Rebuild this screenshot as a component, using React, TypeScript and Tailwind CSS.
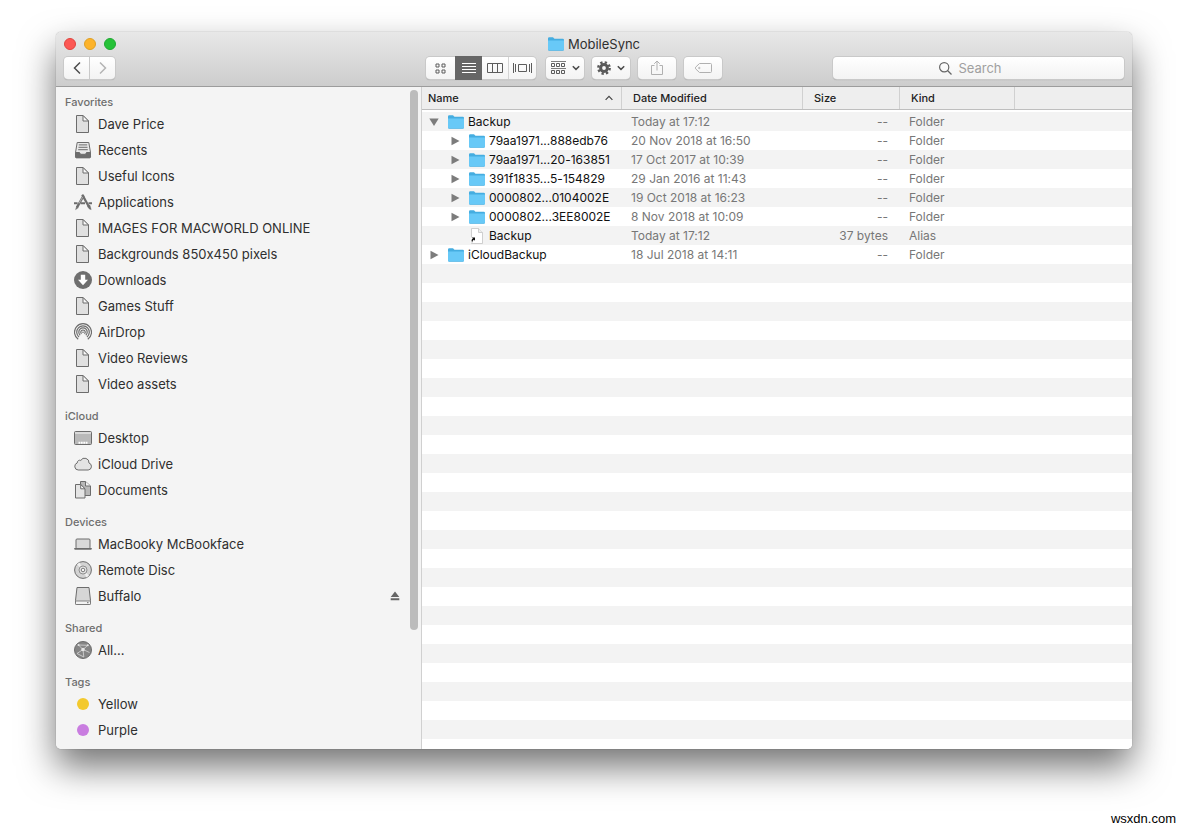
import type { ReactNode } from "react";

type SidebarItem = { label: string; icon: ReactNode; eject?: boolean };
type SidebarSection = { title: string; items: SidebarItem[] };
type FileRow = {
    name: string;
    date: string;
    size: string;
    kind: string;
    type: "folder" | "alias";
    child?: boolean;
    open?: boolean;
};

/* Sidebar icons, all on an 18px grid */
function Glyph({ children }: { children: ReactNode }) {
    return (
        <svg viewBox="0 0 18 18" className="size-[18px] shrink-0" fill="none" stroke="#6c6c6c" aria-hidden="true">
            {children}
        </svg>
    );
}

const DocIcon = () => (
    <Glyph>
        <path d="M2.500.5H9l5.500 5.500v11.500h-12z" fill="#e0e0e0" />
        <path d="M9 .5l5.500 5.500H9z" fill="#f8f8f8" />
    </Glyph>
);

const RecentsIcon = () => (
    <Glyph>
        <path d="M3.200 1.500h11.600l1.700 10v4.200a1 1 0 0 1-1 1h-13a1 1 0 0 1-1-1v-4.200z" fill="#e8e8e8" />
        <path d="M1.500 11.500h4l1 1.800h5l1-1.800h4v4.200a1 1 0 0 1-1 1h-13a1 1 0 0 1-1-1z" fill="#6c6c6c" />
        <path d="M4.800 3.900h8.400M4.500 6.300h9M4.200 8.700h9.600" />
    </Glyph>
);

const ApplicationsIcon = () => (
    <Glyph>
        <path d="M9.700 2.500 3 14.300" strokeWidth="2.400" />
        <path d="M2.600 13.600l-1 3 2.600-1.800z" fill="#6c6c6c" strokeWidth=".5" />
        <path d="M8.200 1.600l6.600 11.900" strokeWidth="2.200" />
        <path d="M13.600 13.200l2.300-1.100 1.300 4.500c-1.900-.3-3.100-1.500-3.600-3.400z" fill="#6c6c6c" strokeWidth=".4" />
        <path d="M0 10.300h3.600M6.500 10.300h4.500M14.500 10.300H18" strokeWidth="2" />
        <path d="M8.800 3.800 5 10.500" stroke="#dedede" strokeWidth=".6" />
    </Glyph>
);

const DownloadsIcon = () => (
    <Glyph>
        <circle cx="9" cy="9" r="9" fill="#6f6f6f" stroke="none" />
        <path d="M6.800 3.800h4.400v5h2.800L9 14.200 4 8.800h2.800z" fill="#fff" stroke="none" />
    </Glyph>
);

const AirDropIcon = () => (
    <Glyph>
        <path d="M4.200 16.200a8.500 8.500 0 1 1 9.600 0" strokeWidth="1.200" />
        <path d="M5 14a6.300 6.300 0 1 1 8 0" strokeWidth="1.200" />
        <path d="M6.200 12.200a4.200 4.200 0 1 1 5.600 0" strokeWidth="1.200" />
        <path d="M7.500 10.800a2.200 2.200 0 1 1 3 0" strokeWidth="1.200" />
        <circle cx="9" cy="9.200" r=".8" fill="#6c6c6c" stroke="none" />
    </Glyph>
);

const DesktopIcon = () => (
    <Glyph>
        <rect x=".5" y="2.500" width="17" height="13" rx="1" fill="#b9b9b9" />
        <path d="M1 4h16" stroke="#efefef" strokeWidth="1.200" />
        <path d="M4.500 13.800h9" stroke="#fff" strokeWidth="2" strokeDasharray="1.800 .6" />
    </Glyph>
);

const CloudIcon = () => (
    <Glyph>
        <path
            d="M4.200 15a3.600 3.600 0 0 1-1-7 2.600 2.600 0 0 1 3.600-2.600 4.400 4.400 0 0 1 8.200 2.600 3.600 3.600 0 0 1-.8 7z"
            fill="#e4e4e4"
        />
    </Glyph>
);

const DocumentsIcon = () => (
    <Glyph>
        <path d="M6.500.5h5l5 4.500v9.500h-10z" fill="#b8b8b8" />
        <path d="M11.500.5v4.500h5" fill="#f2f2f2" />
        <path d="M1.500 3.500h5.200l4.300 4.300v9.200H1.500z" fill="#e4e4e4" />
        <path d="M6.700 3.500v4.300H11z" fill="#fafafa" />
    </Glyph>
);

const LaptopIcon = () => (
    <Glyph>
        <rect x="2" y="4" width="14" height="9.500" rx="1" fill="#d9d9d9" />
        <path d="M.2 13h17.600v.8a1 1 0 0 1-1 1H1.200a1 1 0 0 1-1-1z" fill="#6c6c6c" stroke="none" />
    </Glyph>
);

const DiscIcon = () => (
    <Glyph>
        <circle cx="9" cy="9" r="8.400" fill="#d3d3d3" />
        <path d="M9 9 3 3.500 5.500 1.500zM9 9l6 5.500-2.500 2z" fill="#f0f0f0" stroke="none" />
        <circle cx="9" cy="9" r="4" fill="#e6e6e6" strokeWidth=".7" />
        <circle cx="9" cy="9" r="1.800" fill="#f4f4f4" strokeWidth=".9" />
    </Glyph>
);

const DriveIcon = () => (
    <Glyph>
        <path d="M3 .5h12l1.500 13v3a1 1 0 0 1-1 1h-13a1 1 0 0 1-1-1v-3z" fill="#d6d6d6" />
        <path d="M1.500 14h15v2.500a1 1 0 0 1-1 1h-13a1 1 0 0 1-1-1z" fill="#f3f3f3" strokeWidth=".8" />
        <path d="M13 15.700h1.500" />
    </Glyph>
);

const GlobeIcon = () => (
    <Glyph>
        <circle cx="9" cy="9" r="8.500" fill="#858585" />
        <path
            d="M9 8.500 4.500 4M9 8.500l4.800-4.200M9 8.500 9.800 16M9 8.500 3 12.500M9 8.500l6.500 3M4.500 4l9.300.3M3 12.500l6.800 3.500"
            stroke="#d8d8d8"
            strokeWidth=".8"
        />
        <path d="M9 6.700a1.800 1.800 0 1 1 0 3.600 1.800 1.800 0 0 1 0-3.600zM4.500 3a1 1 0 1 1 0 2 1 1 0 0 1 0-2zM13.800 3.300a1 1 0 1 1 0 2 1 1 0 0 1 0-2z" fill="#e4e4e4" stroke="none" />
    </Glyph>
);

const TagDot = ({ color }: { color: string }) => (
    <Glyph>
        <circle cx="9" cy="9" r="6" fill={color} stroke="none" />
    </Glyph>
);

const FolderIcon = () => (
    <svg viewBox="0 0 16 14" className="h-[14px] w-4 shrink-0" aria-hidden="true">
        <path d="M0 1.500A1.200 1.200 0 0 1 1.200.3h3.600c.8 0 1 1.400 1.900 1.400h8.100A1.200 1.200 0 0 1 16 2.900v9.600a1.200 1.200 0 0 1-1.200 1.200H1.200A1.200 1.200 0 0 1 0 12.500z" fill="#45ade0" />
        <path d="M0 3.400h16v8.900a1 1 0 0 1-1 1H1a1 1 0 0 1-1-1z" fill="#68c9f7" />
    </svg>
);

const AliasIcon = () => (
    <svg viewBox="0 0 16 16" className="size-4 shrink-0" aria-hidden="true">
        <path d="M2.500.5h7l4 4v11h-11z" fill="#fff" stroke="#c4c4c4" strokeWidth=".8" />
        <path d="M9.500.5v4h4" fill="#eee" stroke="#c4c4c4" strokeWidth=".8" />
        <path d="M1.500 9.500h5v5h-5z" fill="#fff" />
        <path d="M2.800 9.500H6v3.200l-1-1c-1.300.6-1.800 1.500-1.600 3-1.400-1.800-1-3.300.5-4.100z" fill="#111" />
    </svg>
);

const Disclosure = ({ open }: { open?: boolean }) => (
    <svg viewBox="0 0 10 10" className="size-[10px] shrink-0" fill="#7c7c7c" aria-hidden="true">
        {open ? <path d="M.3 1.500h9.400L5 9z" /> : <path d="M1.500.8v8.400L9.500 5z" />}
    </svg>
);

const Chevron = () => (
    <svg viewBox="0 0 8 6" className="h-[6px] w-2" fill="none" stroke="#4c4c4c" strokeWidth="1.500" aria-hidden="true">
        <path d="M.8 1.200 4 4.400l3.200-3.200" />
    </svg>
);

const sections: SidebarSection[] = [
    {
        title: "Favorites",
        items: [
            { label: "Dave Price", icon: <DocIcon /> },
            { label: "Recents", icon: <RecentsIcon /> },
            { label: "Useful Icons", icon: <DocIcon /> },
            { label: "Applications", icon: <ApplicationsIcon /> },
            { label: "IMAGES FOR MACWORLD ONLINE", icon: <DocIcon /> },
            { label: "Backgrounds 850x450 pixels", icon: <DocIcon /> },
            { label: "Downloads", icon: <DownloadsIcon /> },
            { label: "Games Stuff", icon: <DocIcon /> },
            { label: "AirDrop", icon: <AirDropIcon /> },
            { label: "Video Reviews", icon: <DocIcon /> },
            { label: "Video assets", icon: <DocIcon /> },
        ],
    },
    {
        title: "iCloud",
        items: [
            { label: "Desktop", icon: <DesktopIcon /> },
            { label: "iCloud Drive", icon: <CloudIcon /> },
            { label: "Documents", icon: <DocumentsIcon /> },
        ],
    },
    {
        title: "Devices",
        items: [
            { label: "MacBooky McBookface", icon: <LaptopIcon /> },
            { label: "Remote Disc", icon: <DiscIcon /> },
            { label: "Buffalo", icon: <DriveIcon />, eject: true },
        ],
    },
    { title: "Shared", items: [{ label: "All...", icon: <GlobeIcon /> }] },
    {
        title: "Tags",
        items: [
            { label: "Yellow", icon: <TagDot color="#f3c92d" /> },
            { label: "Purple", icon: <TagDot color="#c97de0" /> },
        ],
    },
];

const files: FileRow[] = [
    { name: "Backup", date: "Today at 17:12", size: "--", kind: "Folder", type: "folder", open: true },
    { name: "79aa1971...888edb76", date: "20 Nov 2018 at 16:50", size: "--", kind: "Folder", type: "folder", child: true },
    { name: "79aa1971...20-163851", date: "17 Oct 2017 at 10:39", size: "--", kind: "Folder", type: "folder", child: true },
    { name: "391f1835...5-154829", date: "29 Jan 2016 at 11:43", size: "--", kind: "Folder", type: "folder", child: true },
    { name: "0000802...0104002E", date: "19 Oct 2018 at 16:23", size: "--", kind: "Folder", type: "folder", child: true },
    { name: "0000802...3EE8002E", date: "8 Nov 2018 at 10:09", size: "--", kind: "Folder", type: "folder", child: true },
    { name: "Backup", date: "Today at 17:12", size: "37 bytes", kind: "Alias", type: "alias", child: true },
    { name: "iCloudBackup", date: "18 Jul 2018 at 14:11", size: "--", kind: "Folder", type: "folder" },
];

const control =
    "flex h-[22px] items-center justify-center bg-linear-to-b from-white to-[#f3f3f3] shadow-[0_0_0_1px_#c9c9c9,0_1px_1px_#999]";

function TitleBar() {
    return (
        <header className="border-b border-[#9c9c9c] bg-linear-to-b from-[#e8e8e8] to-[#cdcdcd] px-2 pb-[7px]">
            <div className="mb-px grid h-6 grid-cols-[1fr_auto_1fr] items-center">
                <div className="flex gap-2">
                    <button aria-label="Close" className="size-3 rounded-full border border-[#e0443e] bg-[#fc5753]" />
                    <button aria-label="Minimize" className="size-3 rounded-full border border-[#dfa023] bg-[#fdb32a]" />
                    <button aria-label="Zoom" className="size-3 rounded-full border border-[#1fa932] bg-[#26c238]" />
                </div>
                <h1 className="flex items-center gap-1 text-[13px] leading-5 text-[#2f2f2f]">
                    <FolderIcon />
                    MobileSync
                </h1>
            </div>

            <div className="flex items-center">
                <div className="flex w-[362px] shrink-0 gap-px">
                    <button aria-label="Back" className={`${control} w-[25px] rounded-l-[4px]`}>
                        <svg viewBox="0 0 8 14" className="h-[14px] w-2" fill="none" stroke="#4c4c4c" strokeWidth="1.500">
                            <path d="M7 1.500 1.500 7 7 12.500" />
                        </svg>
                    </button>
                    <button aria-label="Forward" className={`${control} w-[25px] rounded-r-[4px]`}>
                        <svg viewBox="0 0 8 14" className="h-[14px] w-2" fill="none" stroke="#b4b4b4" strokeWidth="1.500">
                            <path d="M1 1.500 6.500 7 1 12.500" />
                        </svg>
                    </button>
                </div>

                {/* View modes */}
                <div className={`${control} rounded-[4px]`}>
                    <button aria-label="Icon view" className="flex h-[22px] w-[29px] items-center justify-center">
                        <svg viewBox="0 0 11 11" className="size-[11px]" fill="none" stroke="#5c5c5c">
                            <path d="M1 1h3v3H1zM7 1h3v3H7zM1 7h3v3H1zM7 7h3v3H7z" />
                        </svg>
                    </button>
                    <button aria-label="List view" className="flex h-6 w-[27px] items-center justify-center bg-[#666]">
                        <svg viewBox="0 0 14 12" className="h-3 w-[14px]" stroke="#fff">
                            <path d="M0 1.500h14M0 4.500h14M0 7.500h14M0 10.500h14" />
                        </svg>
                    </button>
                    <button aria-label="Column view" className="flex h-[22px] w-[27px] items-center justify-center border-r border-[#d4d4d4]">
                        <svg viewBox="0 0 16 10" className="h-[10px] w-4" fill="none" stroke="#5c5c5c">
                            <path d="M.5.5h15v9H.5zM5.500.5v9M10.500.5v9" />
                        </svg>
                    </button>
                    <button aria-label="Cover flow view" className="flex h-[22px] w-[27px] items-center justify-center">
                        <svg viewBox="0 0 19 10" className="h-[10px] w-[19px]" fill="none" stroke="#5c5c5c">
                            <path d="M.5 0v10M2.500 1v8M16.500 1v8M18.500 0v10M5.500 1.500h8v7h-8z" />
                        </svg>
                    </button>
                </div>

                <div className="ml-[10px] flex gap-2">
                    <button aria-label="Arrange" className={`${control} w-[38px] gap-[6px] rounded-[4px]`}>
                        <svg viewBox="0 0 15 14" className="h-[14px] w-[15px]" fill="none" stroke="#5c5c5c">
                            <path d="M0 .5h15M0 7.500h15" strokeWidth=".8" />
                            <path d="M.5 2.500h3v3h-3zM5.500 2.500h3v3h-3zM10.500 2.500h3v3h-3zM.5 9.500h3v3h-3zM5.500 9.500h3v3h-3zM10.500 9.500h3v3h-3z" />
                        </svg>
                        <Chevron />
                    </button>
                    <button aria-label="Action" className={`${control} w-[38px] gap-[6px] rounded-[4px]`}>
                        <svg viewBox="0 0 14 14" className="size-[14px]" fill="none" stroke="#5a5a5a">
                            <circle cx="7" cy="7" r="3.400" strokeWidth="3" />
                            <circle cx="7" cy="7" r="5.700" strokeWidth="2.400" strokeDasharray="2.300 2.177" />
                        </svg>
                        <Chevron />
                    </button>
                    <button aria-label="Share" className={`${control} w-[38px] rounded-[4px]`}>
                        <svg viewBox="0 0 12 16" className="h-4 w-3" fill="none" stroke="#b0b0b0">
                            <path d="M3.500 5.500h-3v9h11v-9h-3M6 10.500V1M3.200 3.800 6 1l2.800 2.800" />
                        </svg>
                    </button>
                    <button aria-label="Edit tags" className={`${control} w-[38px] rounded-[4px]`}>
                        <svg viewBox="0 0 17 10" className="h-[10px] w-[17px]" fill="none" stroke="#b0b0b0">
                            <path d="M4.500.5h11a1 1 0 0 1 1 1v7a1 1 0 0 1-1 1h-11L.6 5.800a1.300 1.300 0 0 1 0-1.600z" />
                            <circle cx="4.300" cy="5" r=".7" />
                        </svg>
                    </button>
                </div>

                <label className={`${control} ml-auto w-[291px] gap-[6px] rounded-[4px] pr-4`}>
                    <svg viewBox="0 0 13 13" className="size-[13px]" fill="none" stroke="#666" strokeWidth="1.200" aria-hidden="true">
                        <circle cx="5.200" cy="5.200" r="4.600" />
                        <path d="M8.500 8.500l4 4" />
                    </svg>
                    <input
                        type="search"
                        aria-label="Search"
                        placeholder="Search"
                        className="field-sizing-content text-[13px] leading-5 outline-none placeholder:text-[#a0a0a0]"
                    />
                </label>
            </div>
        </header>
    );
}

function Sidebar() {
    return (
        <aside className="flex w-[366px] shrink-0 border-r border-[#d0d0d0] bg-[#f4f4f4] pr-[3px]">
            <nav className="flex flex-1 flex-col gap-[10px] py-[6px]">
                {sections.map((section) => (
                    <section key={section.title}>
                        <h2 className="pl-[9px] text-[11px] leading-[18px] font-medium text-[#6e6e6e]">{section.title}</h2>
                        <ul>
                            {section.items.map((item) => (
                                <li key={item.label} className="flex h-[26px] items-center justify-between pr-[10px] pl-[18px]">
                                    <a href="#" className="flex items-center gap-[6px] text-[13px] leading-5 text-[#2f2f2f]">
                                        {item.icon}
                                        {item.label}
                                    </a>
                                    {item.eject && (
                                        <button aria-label={`Eject ${item.label}`}>
                                            <svg viewBox="0 0 10 10" className="size-[10px]" fill="#666">
                                                <path d="M5 .5 9.300 6H.7zM.7 7.300h8.600v2H.7z" />
                                            </svg>
                                        </button>
                                    )}
                                </li>
                            ))}
                        </ul>
                    </section>
                ))}
            </nav>
            {/* Scrollbar */}
            <div className="flex w-2 flex-col pt-[3px]">
                <div className="grow-[82] rounded-full bg-[#bcbcbc]" />
                <div className="grow-[18]" />
            </div>
        </aside>
    );
}

function FileList() {
    const head = "flex h-[22px] items-center text-[11px] font-medium text-[#222]";

    return (
        <main className="flex min-w-0 flex-1 flex-col bg-white">
            <table className="w-full table-fixed text-left text-[12px] text-[#777]">
                <colgroup>
                    <col className="w-[200px]" />
                    <col className="w-[181px]" />
                    <col className="w-[97px]" />
                    <col className="w-[115px]" />
                    <col />
                </colgroup>
                <thead>
                    <tr>
                        <th className="p-0 pb-[2px]">
                            <div className="border-b border-[#bebebe] bg-[#eee]">
                                <div className={`${head} justify-between border-r border-[#d0d0d0] pr-2 pl-[6px]`}>
                                    Name
                                    <svg viewBox="0 0 8 6" className="h-[6px] w-2" fill="none" stroke="#444" strokeWidth="1.200" aria-hidden="true">
                                        <path d="M.6 4.800 4 1.400l3.400 3.400" />
                                    </svg>
                                </div>
                            </div>
                        </th>
                        <th className="p-0 pb-[2px]">
                            <div className="border-b border-[#bebebe] bg-[#eee]">
                                <div className={`${head} border-r border-[#d0d0d0] pl-[11px]`}>Date Modified</div>
                            </div>
                        </th>
                        <th className="p-0 pb-[2px]">
                            <div className="border-b border-[#bebebe] bg-[#eee]">
                                <div className={`${head} border-r border-[#d0d0d0] pl-[11px]`}>Size</div>
                            </div>
                        </th>
                        <th className="p-0 pb-[2px]">
                            <div className="border-b border-[#bebebe] bg-[#eee]">
                                <div className={`${head} border-r border-[#d0d0d0] pl-[11px]`}>Kind</div>
                            </div>
                        </th>
                        <td className="p-0 pb-[2px]">
                            <div className="border-b border-[#bebebe] bg-[#eee]">
                                <div className={head} />
                            </div>
                        </td>
                    </tr>
                </thead>
                <tbody className="leading-[19px]">
                    {files.map((file, i) => (
                        <tr key={i} className="h-[19px] odd:bg-[#f3f3f3]">
                            <td className="p-0">
                                <div className={`flex h-[19px] items-center text-[#111] ${file.child ? "pl-7" : "pl-[7px]"}`}>
                                    {file.type === "folder" ? <Disclosure open={file.open} /> : <span className="w-[10px]" />}
                                    <span className="flex items-center gap-1 pl-[9px] whitespace-nowrap">
                                        {file.type === "folder" ? <FolderIcon /> : <AliasIcon />}
                                        {file.name}
                                    </span>
                                </div>
                            </td>
                            <td className="p-0 pl-[9px] whitespace-nowrap">{file.date}</td>
                            <td className="p-0 pr-3 text-right">{file.size}</td>
                            <td className="p-0 pl-[9px]">{file.kind}</td>
                            <td className="p-0" />
                        </tr>
                    ))}
                </tbody>
            </table>
            {/* Empty striped rows carry on to the bottom of the window */}
            <div className="flex-1 bg-[repeating-linear-gradient(#f3f3f3_0_19px,#fff_19px_38px)]" />
        </main>
    );
}

export default function App() {
    return (
        <div className="flex min-h-screen flex-col bg-white px-14 pt-8 font-['Inter','Liberation_Sans',sans-serif] [font-feature-settings:'calt'_0]">
            <div className="flex flex-1 flex-col overflow-hidden rounded-[5px] shadow-[0_0_1px_rgba(0,0,0,0.5),0_18px_36px_rgba(0,0,0,0.55)]">
                <TitleBar />
                <div className="flex flex-1">
                    <Sidebar />
                    <FileList />
                </div>
            </div>
            <footer className="-mr-11 flex h-20 items-end justify-end pb-[2px] font-['Liberation_Sans',sans-serif] text-[13px] leading-4 text-black">
                wsxdn.com
            </footer>
        </div>
    );
}
